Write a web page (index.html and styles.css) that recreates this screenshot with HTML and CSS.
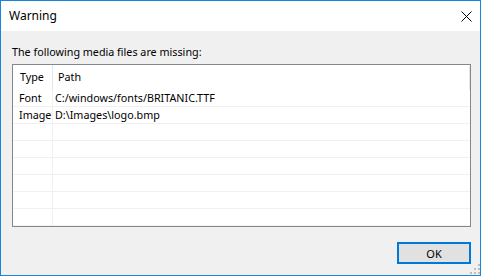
FILE: index.html
```html
<!DOCTYPE html>
<html>
<head>
<meta charset="utf-8">
<link rel="stylesheet" href="styles.css">
</head>
<body>
<div class="window">
  <div class="titlebar">
    <span class="title">Warning</span>
    <svg class="close" width="11" height="11" viewBox="0 0 11 11"><path d="M0.5 0.5 L10.5 10.5 M10.5 0.5 L0.5 10.5" stroke="#000" stroke-width="1" fill="none"/></svg>
  </div>
  <div class="content">
    <div class="label">The following media files are missing:</div>
    <div class="list">
      <div class="header">
        <div class="hcell c1">Type</div>
        <div class="hcell c2">Path</div>
        <div class="hcell c3"></div>
      </div>
      <div class="row"><div class="cell c1">Font</div><div class="cell c2">C:/windows/fonts/BRITANIC.TTF</div></div>
      <div class="row"><div class="cell c1">Image</div><div class="cell c2">D:\Images\logo.bmp</div></div>
      <div class="row"><div class="cell c1"></div><div class="cell c2"></div></div>
      <div class="row"><div class="cell c1"></div><div class="cell c2"></div></div>
      <div class="row"><div class="cell c1"></div><div class="cell c2"></div></div>
      <div class="row"><div class="cell c1"></div><div class="cell c2"></div></div>
      <div class="row"><div class="cell c1"></div><div class="cell c2"></div></div>
      <div class="row"><div class="cell c1"></div><div class="cell c2"></div></div>
    </div>
    <div class="footer">
      <button class="ok">OK</button>
    </div>
    <svg class="grip" width="10" height="10" viewBox="0 0 10 10" fill="#bcbcbc">
      <rect x="8" y="0" width="2" height="2"/>
      <rect x="4" y="4" width="2" height="2"/><rect x="8" y="4" width="2" height="2"/>
      <rect x="0" y="8" width="2" height="2"/><rect x="4" y="8" width="2" height="2"/><rect x="8" y="8" width="2" height="2"/>
    </svg>
  </div>
</div>
</body>
</html>
```
FILE: styles.css
```css
html, body {
  margin: 0;
  padding: 0;
  background: #ffffff;
}
body {
  font-family: "Noto Sans", "Liberation Sans", sans-serif;
  font-size: 10.75px;
  color: #000;
}
.window {
  box-sizing: border-box;
  width: 481px;
  height: 276px;
  border: 1px solid #1a84d8;
  display: flex;
  flex-direction: column;
}
.titlebar {
  height: 30px;
  background: #fff;
  display: flex;
  align-items: center;
  justify-content: space-between;
  padding: 0 8px 0 8px;
  flex: none;
}
.title {
  font-size: 12px;
  padding-bottom: 1px;
}
.close {
  display: block;
}
.content {
  flex: 1;
  background: #f0f0f0;
  position: relative;
  display: flex;
  flex-direction: column;
  padding: 13px 9px 0 11px;
}
.label {
  height: 16px;
  line-height: 16px;
  margin-bottom: 4px;
}
.list {
  box-sizing: border-box;
  width: 459px;
  height: 163px;
  border: 1px solid #828790;
  background: #fff;
  overflow: hidden;
}
.header {
  display: flex;
  height: 25px;
}
.hcell {
  box-sizing: border-box;
  line-height: 24px;
  height: 25px;
}
.header .c1 {
  width: 40px;
  padding-left: 7px;
  border-right: 1px solid #e5e5e5;
}
.header .c2 {
  width: 416px;
  padding-left: 5px;
}
.header .c3 {
  width: 1px;
  height: 24px;
  margin-top: 1px;
  background: #e5e5e5;
}
.row {
  display: flex;
  height: 17px;
  box-sizing: border-box;
  border-bottom: 1px solid #f0f0f0;
}
.cell {
  box-sizing: border-box;
  line-height: 16px;
  height: 16px;
  white-space: nowrap;
}
.row .c1 {
  width: 40px;
  padding-left: 6px;
  border-right: 1px solid #f0f0f0;
}
.row .c2 {
  flex: 1;
  padding-left: 2px;
}
.footer {
  display: flex;
  justify-content: flex-end;
  padding-top: 15px;
}
.ok {
  box-sizing: border-box;
  width: 74px;
  height: 22px;
  margin: 0;
  padding: 0;
  border: 2px solid #0078d7;
  background: #e1e1e1;
  font-family: "Noto Sans", "Liberation Sans", sans-serif;
  font-size: 11px;
  color: #000;
}
.grip {
  position: absolute;
  right: 0;
  bottom: 1px;
}
```
